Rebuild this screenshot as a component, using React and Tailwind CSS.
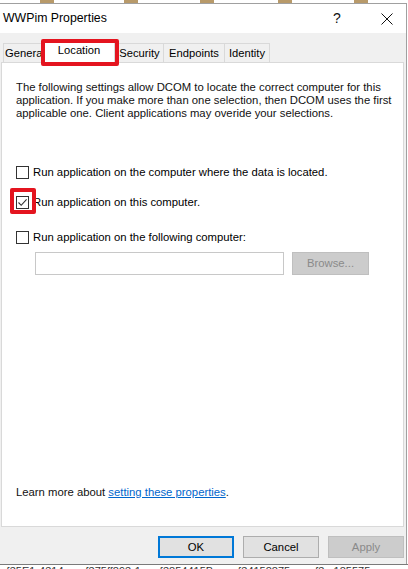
import React from "react";

function CheckBox({ checked }) {
  return (
    <div className="w-[13px] h-[13px] border border-[#333333] bg-white flex items-center justify-center shrink-0">
      {checked && (
        <svg width="11" height="11" viewBox="0 0 11 11">
          <path d="M1.5 5.5 L4.2 8.3 L9.6 2.4" fill="none" stroke="#333333" strokeWidth="1.1" />
        </svg>
      )}
    </div>
  );
}

export default function App() {
  const tabBase =
    "h-[19px] flex items-center justify-center border-t border-l border-[#d9d9d9] bg-[#f0f0f0] text-[11.2px]";
  return (
    <div className="w-[408px] h-[569px] overflow-hidden bg-white flex flex-col text-black font-['Liberation_Sans',Arial,sans-serif] text-[11.3px]">
      {/* desktop strip above dialog */}
      <div className="h-[3px] flex shrink-0">
        <div className="w-[40px]" />
        <div className="w-[14px] bg-[#b89a6a]" />
        <div className="w-[70px]" />
        <div className="w-[14px] bg-[#b89a6a]" />
        <div className="w-[62px]" />
        <div className="w-[14px] bg-[#b89a6a]" />
        <div className="w-[64px]" />
        <div className="w-[14px] bg-[#b89a6a]" />
        <div className="w-[62px]" />
        <div className="w-[14px] bg-[#b89a6a]" />
      </div>

      {/* dialog */}
      <div className="w-[407px] flex flex-col border-t border-r border-[#a0a0a0] shrink-0">
        {/* title bar */}
        <div className="h-[29px] bg-white flex items-center pl-[3px] text-[12.3px] text-black">
          <div className="flex-1">WWPim Properties</div>
          <div className="w-[12px] text-[14px] mr-[36px] text-[#111]">?</div>
          <svg width="12" height="12" viewBox="0 0 12 12" className="mr-[13px]">
            <path d="M0.5 0.5 L11.5 11.5 M11.5 0.5 L0.5 11.5" stroke="#111" strokeWidth="1" />
          </svg>
        </div>

        {/* body */}
        <div className="bg-[#f0f0f0] flex flex-col pt-[7px] pl-[1px] pr-[2px] h-[531px]">
          {/* tabs */}
          <div className="h-[22px] flex items-end pl-[2px] relative z-10">
            <div className={tabBase + " w-[40px] pl-[3px]"}>General</div>
            <div className="relative h-[23px] w-[72px] -mb-px flex items-center justify-center bg-white border-t border-l border-r border-[#d9d9d9] text-[11.2px] pb-[3px]">
              Location
              <div className="absolute -left-[3px] -top-[2px] w-[78px] h-[27px] border-[4px] border-[#e4141f] rounded-[2px]" />
            </div>
            <div className={tabBase + " w-[48px]"}>Security</div>
            <div className={tabBase + " w-[61px]"}>Endpoints</div>
            <div className={tabBase + " w-[46px] border-r"}>Identity</div>
          </div>

          {/* panel */}
          <div className="h-[465px] border border-[#d9d9d9] bg-white flex flex-col pl-[14px] pt-[18px] pb-[27px]">
            <p className="leading-[13px] text-[#111]">
              The following settings allow DCOM to locate the correct computer for this
              <br />
              application. If you make more than one selection, then DCOM uses the first
              <br />
              applicable one. Client applications may overide your selections.
            </p>

            <div className="mt-[46px] flex items-center gap-[4px] h-[13px]">
              <CheckBox />
              <span>Run application on the computer where the data is located.</span>
            </div>

            <div className="mt-[17px] flex items-center gap-[4px] h-[13px] relative">
              <CheckBox checked />
              <span>Run application on this computer.</span>
              <div className="absolute -left-[6px] -top-[8px] w-[26px] h-[26px] border-[4px] border-[#e4141f] rounded-[2px]" />
            </div>

            <div className="mt-[22px] flex items-center gap-[4px] h-[13px]">
              <CheckBox />
              <span>Run application on the following computer:</span>
            </div>

            <div className="mt-[8px] ml-[19px] flex items-center gap-[8px]">
              <div className="w-[249px] h-[23px] border border-[#c8c8c8] bg-white" />
              <div className="w-[77px] h-[23px] border border-[#bfbfbf] bg-[#cccccc] flex items-center justify-center text-[#8a8a8a]">
                Browse...
              </div>
            </div>

            <div className="mt-auto leading-[13px] text-[#111]">
              Learn more about{" "}
              <span className="text-[#0066cc] underline">setting these properties</span>.
            </div>
          </div>

          {/* buttons */}
          <div className="mt-[9px] flex justify-end gap-[9px] pr-0">
            <div className="w-[76px] h-[22px] border border-[#0078d7] bg-[#e1e1e1] flex items-center justify-center shadow-[inset_0_0_0_1px_#0078d7]">
              OK
            </div>
            <div className="w-[76px] h-[22px] border border-[#adadad] bg-[#e1e1e1] flex items-center justify-center">
              Cancel
            </div>
            <div className="w-[76px] h-[22px] border border-[#bfbfbf] bg-[#cccccc] flex items-center justify-center text-[#8a8a8a]">
              Apply
            </div>
          </div>
        </div>
      </div>

      {/* below dialog */}
      <div className="flex-1 border-t border-[#7a7a7a] overflow-hidden bg-white">
        <div className="whitespace-pre text-[11px] leading-[13px] text-[#333] pl-[6px]">
          {"{35E1-4314       {375ff893-1      {3854415B        {34158875        {3   185575"}
        </div>
      </div>
    </div>
  );
}
